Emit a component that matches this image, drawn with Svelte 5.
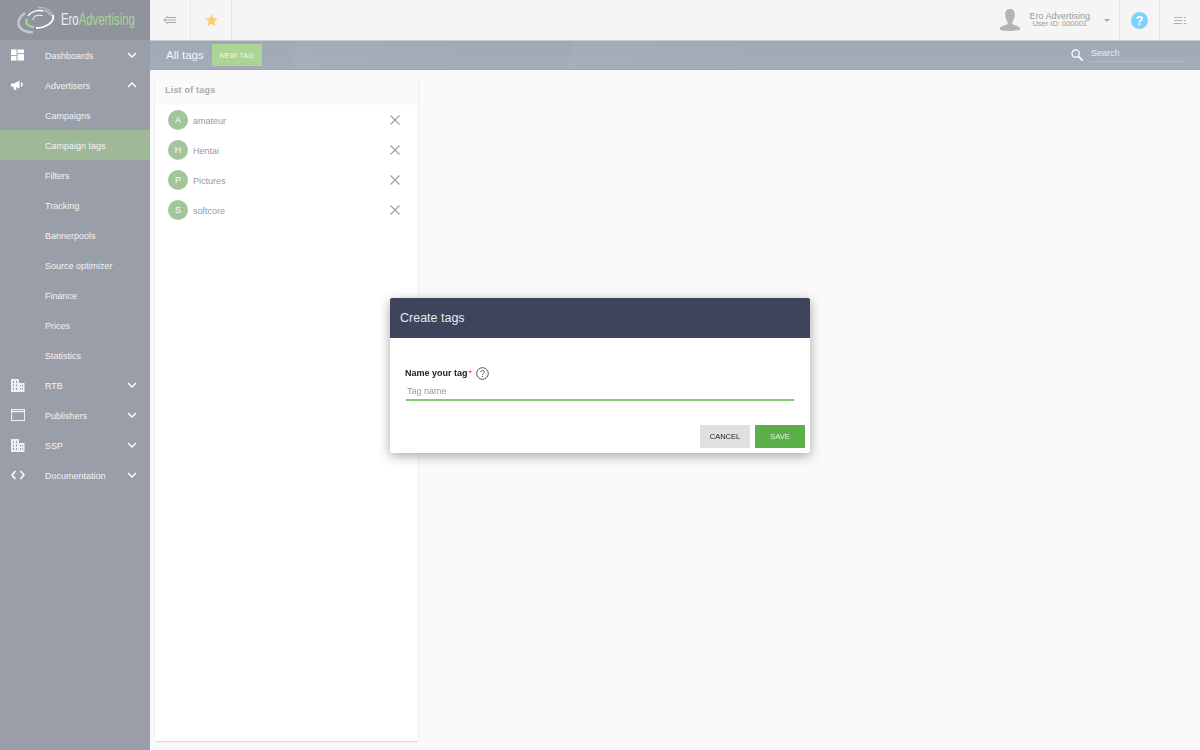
<script>
    const nav = [
        { label: "Dashboards", icon: "dash", arrow: "down" },
        { label: "Advertisers", icon: "horn", arrow: "up" },
        { label: "Campaigns" },
        { label: "Campaign tags", active: true },
        { label: "Filters" },
        { label: "Tracking" },
        { label: "Bannerpools" },
        { label: "Source optimizer" },
        { label: "Finance" },
        { label: "Prices" },
        { label: "Statistics" },
        { label: "RTB", icon: "building", arrow: "down" },
        { label: "Publishers", icon: "window", arrow: "down" },
        { label: "SSP", icon: "building", arrow: "down" },
        { label: "Documentation", icon: "code", arrow: "down" },
    ];

    const tags = ["amateur", "Hentai", "Pictures", "softcore"];
</script>

<div class="layout">
    <aside class="sidebar">
        <div class="logo">
            <svg width="44" height="32" viewBox="14 4 44 32" fill="none">
                <path d="M33 32 C24 33 16 27 19 20 C20 17 22 15 25 13" stroke="#c5c6c8" stroke-width="2.5" />
                <path d="M38 7.5 C46 7 52 11 53 17" stroke="#b9bbc0" stroke-width="1.3" />
                <path d="M38 10 C44 9.5 49 12 51 16" stroke="#c5c6c8" stroke-width="1.3" />
                <path d="M34 27 C28 27 25 23 27 19" stroke="#a5d48e" stroke-width="2.2" />
                <path d="M28 16 C31 12 37 10 43 11" stroke="#fff" stroke-width="1.4" />
                <path d="M53 15 C55 22 46 28 36 28" stroke="#fff" stroke-width="1.8" />
                <path d="M33 20 C33 16 38 14 43 16" stroke="#fff" stroke-width="1" />
            </svg>
            <span class="logo-text"><span>Ero</span><span class="logo-green">Advertising</span></span>
        </div>
        <nav>
            {#each nav as item}
                <a href="#top" class="nav-item" class:active={item.active}>
                    <span class="nav-icon">
                        {#if item.icon === "dash"}
                            <svg width="13" height="12" viewBox="0 0 14 12" fill="#fff">
                                <rect x="0" y="0" width="6" height="6" />
                                <rect x="0" y="7" width="6" height="5" />
                                <rect x="7" y="0" width="7" height="4" />
                                <rect x="7" y="5" width="7" height="7" />
                            </svg>
                        {:else if item.icon === "horn"}
                            <svg width="13" height="11" viewBox="0 0 13 11" fill="#fff">
                                <path d="M0 3.5 L3 3.5 L8.5 0.5 L8.5 8.5 L5 7 L5.5 10 L3 10 L2.5 6.8 L0 6.5 Z" />
                                <rect x="10" y="2.5" width="1.5" height="4" />
                            </svg>
                        {:else if item.icon === "building"}
                            <svg class="soft" width="14" height="13" viewBox="0 0 14 13" fill="#fff">
                                <path fill-rule="evenodd" d="M0 0 H8 V4 H13.5 V13 H0 Z M2 2 V4 H3 V2 Z M5 2 V4 H6 V2 Z M2 5.5 V7.5 H3 V5.5 Z M5 5.5 V7.5 H6 V5.5 Z M2 9 V11 H3 V9 Z M5 9 V11 H6 V9 Z M9 6 V7.5 H10 V6 Z M11 6 V7.5 H12 V6 Z M9 9 V10.5 H10 V9 Z M11 9 V10.5 H12 V9 Z" />
                            </svg>
                        {:else if item.icon === "window"}
                            <svg class="soft" width="14" height="12" viewBox="0 0 14 12" fill="none" stroke="#fff">
                                <rect x="0.5" y="0.5" width="13" height="11" />
                                <path d="M0 2.5 H14" stroke-width="1.5" />
                            </svg>
                        {:else if item.icon === "code"}
                            <svg width="14" height="10" viewBox="0 0 14 10" fill="none" stroke="#fff" stroke-width="1.5">
                                <path d="M4.5 1 L1 5 L4.5 9" />
                                <path d="M9.5 1 L13 5 L9.5 9" />
                            </svg>
                        {/if}
                    </span>
                    <span class="nav-label">{item.label}</span>
                    {#if item.arrow}
                        <svg class="nav-arrow" width="10" height="6" viewBox="0 0 10 6" fill="none" stroke="#fff" stroke-width="1.4">
                            {#if item.arrow === "down"}
                                <path d="M1 1 L5 5 L9 1" />
                            {:else}
                                <path d="M1 5 L5 1 L9 5" />
                            {/if}
                        </svg>
                    {/if}
                </a>
            {/each}
        </nav>
    </aside>

    <div class="main">
        <header class="topbar">
            <div class="top-cell first">
                <svg width="14" height="10" viewBox="0 0 14 10" fill="none" stroke="#a9a9a9" stroke-width="1">
                    <path d="M4.5 1 L0.8 5 L4.5 9" />
                    <path d="M1 5 H13 M4 2.5 H13 M4 7.5 H13" />
                </svg>
            </div>
            <div class="top-cell first">
                <svg width="13" height="12" viewBox="0 0 24 23" fill="#f8cf6c">
                    <path d="M12 0 L15.5 8 L24 8.8 L17.6 14.5 L19.5 23 L12 18.5 L4.5 23 L6.4 14.5 L0 8.8 L8.5 8 Z" />
                </svg>
            </div>
            <div class="top-space"></div>
            <div class="user">
                <svg class="user-pic" width="20" height="22" viewBox="0 0 20 22" fill="#b4b4b4">
                    <path d="M10 0 C13.5 0 15 2.5 14.8 6 C14.7 9 13.5 11.5 12.5 12.5 L12.5 15 C15 16.5 19 17 20 19 L20 21 Q10 23 0 21 L0 19 C1 17 5 16.500 7.5 15 L7.5 12.5 C6.5 11.5 5.3 9 5.2 6 C5 2.5 6.5 0 10 0 Z" />
                </svg>
                <div class="user-text">
                    <div class="user-name">Ero Advertising</div>
                    <div class="user-id">User ID: 000001</div>
                </div>
                <span class="caret"></span>
            </div>
            <div class="top-cell help-cell">
                <span class="help">?</span>
            </div>
            <div class="menu-cell">
                <svg width="12" height="7" viewBox="0 0 12 7" fill="#b4b4b4">
                    <rect x="0" y="0" width="8.5" height="1" />
                    <rect x="0" y="3" width="8.5" height="1" />
                    <rect x="0" y="6" width="8.5" height="1" />
                    <rect x="10" y="0" width="2" height="1" />
                    <rect x="10" y="3" width="2" height="1" />
                    <rect x="10" y="6" width="2" height="1" />
                </svg>
            </div>
        </header>

        <div class="subheader">
            <h1>All tags</h1>
            <button class="new-tag">NEW TAG</button>
            <div class="search">
                <svg class="search-icon" width="12" height="12" viewBox="0 0 13 13" fill="none" stroke="#fff" stroke-width="1.3">
                    <circle cx="5" cy="5" r="4" />
                    <path d="M8 8 L12.5 12.5" stroke-width="1.8" />
                </svg>
                <span class="search-box">Search</span>
            </div>
        </div>

        <div class="content">
            <section class="card">
                <div class="card-head">List of tags</div>
                {#each tags as tag}
                    <div class="tag-row">
                        <span class="avatar">{tag[0].toUpperCase()}</span>
                        <span class="tag-name">{tag}</span>
                        <svg width="10" height="10" viewBox="0 0 10 10" stroke="#a0a0a0" stroke-width="1.2">
                            <path d="M0.5 0.5 L9.5 9.5 M9.5 0.5 L0.5 9.5" />
                        </svg>
                    </div>
                {/each}
            </section>
        </div>
    </div>
</div>

<div class="overlay">
    <div class="dialog">
        <div class="dialog-head">Create tags</div>
        <div class="dialog-body">
            <div class="field-label">
                <b>Name your tag</b>
                <span class="req">*</span>
                <svg width="13" height="13" viewBox="0 0 13 13" fill="none" stroke="#555">
                    <circle cx="6.5" cy="6.5" r="5.8" />
                    <path d="M4.7 5.2 C4.7 3 8.3 3 8.3 5.1 C8.3 6.4 6.5 6.3 6.5 7.9" />
                    <path d="M6.5 9 V10" />
                </svg>
            </div>
            <input class="field" type="text" placeholder="Tag name" />
        </div>
        <div class="dialog-actions">
            <button class="cancel">CANCEL</button>
            <button class="save">SAVE</button>
        </div>
    </div>
</div>

<style>
    :global(body) {
        background: #fafafa;
        font-family: "Liberation Sans", Arial, sans-serif;
    }
    .layout {
        display: flex;
        height: 750px;
        overflow: hidden;
    }
    .sidebar {
        width: 150px;
        flex-shrink: 0;
        background: #9a9ea9;
    }
    .logo {
        height: 40px;
        background: #8f939d;
        display: flex;
        align-items: center;
        padding-left: 14px;
        box-sizing: border-box;
        white-space: nowrap;
    }
    .logo svg {
        flex-shrink: 0;
    }
    .logo-text {
        color: #eceef0;
        font-size: 16px;
        margin-left: 3px;
        transform: scaleX(0.71);
        transform-origin: left center;
    }
    .logo-green {
        color: #a8d694;
    }
    .nav-item {
        display: flex;
        align-items: center;
        height: 30px;
        color: #f2f3f4;
        font-size: 9px;
        text-decoration: none;
    }
    .nav-item.active {
        background: #9fb897;
    }
    .nav-icon {
        width: 45px;
        flex-shrink: 0;
        display: flex;
        padding-left: 11px;
        box-sizing: border-box;
    }
    .soft {
        opacity: 0.85;
    }
    .nav-label {
        flex: 1;
        padding-top: 1px;
    }
    .nav-arrow {
        margin-right: 13px;
    }
    .main {
        flex: 1;
        display: flex;
        flex-direction: column;
        min-width: 0;
    }
    .topbar {
        height: 40px;
        display: flex;
        background: #f5f5f5;
    }
    .top-cell {
        width: 40px;
        border-right: 1px solid #e6e6e6;
        display: flex;
        align-items: center;
        justify-content: center;
    }
    .top-space {
        flex: 1;
    }
    .user {
        display: flex;
        align-items: center;
        width: 120px;
        box-sizing: border-box;
        border-right: 1px solid #e6e6e6;
    }
    .user-pic {
        flex-shrink: 0;
    }
    .user-text {
        margin-left: 9px;
        width: 61px;
        flex-shrink: 0;
        color: #999;
        text-align: right;
        white-space: nowrap;
    }
    .user-name {
        font-size: 9px;
        line-height: 8px;
        margin-top: -1px;
    }
    .user-id {
        font-size: 7.5px;
        line-height: 7px;
        padding-right: 3px;
    }
    .caret {
        margin-left: 14px;
        border-left: 3px solid transparent;
        border-right: 3px solid transparent;
        border-top: 3px solid #a5a5a5;
    }
    .help-cell {
        width: 39px;
    }
    .help {
        width: 17px;
        height: 17px;
        border-radius: 50%;
        background: #7fd0fb;
        color: #fff;
        font-size: 13px;
        font-weight: 700;
        text-align: center;
        line-height: 17px;
    }
    .menu-cell {
        flex: 0 0 40px;
        display: flex;
        align-items: center;
        justify-content: center;
    }
    .subheader {
        height: 30px;
        display: flex;
        align-items: center;
        padding-left: 16px;
        background:
            linear-gradient(105deg, rgba(255, 255, 255, 0) 14%, rgba(255, 255, 255, 0.035) 14%, rgba(255, 255, 255, 0) 32%),
            linear-gradient(100deg, rgba(255, 255, 255, 0) 40%, rgba(255, 255, 255, 0.03) 40%, rgba(255, 255, 255, 0) 60%),
            linear-gradient(#a1a9b6, #a4acb9);
        box-shadow: inset 0 1px 0 #c8ccd2, inset 0 -1px 0 #9aa2ae;
        color: #fff;
    }
    .subheader h1 {
        font-size: 11.5px;
        font-weight: 400;
        margin: 0 8px 0 0;
        color: #f4f5f6;
    }
    .new-tag {
        height: 22px;
        width: 50px;
        padding: 0;
        border: none;
        background: #acd495;
        color: #f0f7ec;
        font: 7.5px "Liberation Sans", sans-serif;
    }
    .search {
        margin-left: auto;
        display: flex;
        align-items: center;
        margin-right: 16px;
    }
    .search-icon {
        margin-top: -1px;
    }
    .search-box {
        margin: -4px 0 0 7px;
        width: 94px;
        height: 18px;
        line-height: 19px;
        padding-left: 1px;
        box-sizing: border-box;
        border-bottom: 1px solid #b5bbc5;
        font-size: 9px;
        color: #e9ebee;
    }
    .content {
        flex: 1;
        padding: 5px 0 9px 5px;
        display: flex;
        min-height: 0;
    }
    .card {
        width: 263px;
        background: #fff;
        border-radius: 2px;
        box-shadow: 0 1px 2px rgba(0, 0, 0, 0.16);
    }
    .card-head {
        height: 30px;
        line-height: 30px;
        padding-left: 10px;
        background: #fafafa;
        color: #aaa;
        font-size: 9px;
        font-weight: 700;
        letter-spacing: 0.2px;
    }
    .tag-row {
        height: 30px;
        display: flex;
        align-items: center;
        padding: 0 18px 0 13px;
    }
    .avatar {
        width: 20px;
        height: 20px;
        border-radius: 50%;
        background: #a3c59b;
        color: #fff;
        font-size: 9px;
        line-height: 20px;
        text-align: center;
    }
    .tag-name {
        flex: 1;
        margin-left: 5px;
        padding-top: 1px;
        color: #9a9a9a;
        font-size: 9px;
    }
    .overlay {
        position: fixed;
        inset: 0;
        display: flex;
        align-items: center;
        justify-content: center;
    }
    .dialog {
        width: 420px;
        height: 155px;
        margin-top: 1px;
        background: #fff;
        border-radius: 2px;
        box-shadow: 0 3px 12px rgba(0, 0, 0, 0.35);
        display: flex;
        flex-direction: column;
        overflow: hidden;
    }
    .dialog-head {
        height: 40px;
        line-height: 40px;
        padding-left: 10px;
        background: #3d445c;
        color: #e8e9ed;
        font-size: 12.5px;
    }
    .dialog-body {
        flex: 1;
        padding: 28px 16px 0 15px;
    }
    .field-label {
        display: flex;
        align-items: center;
        height: 14px;
        font-size: 9px;
        color: #222;
    }
    .req {
        color: #e3342f;
        margin: 0 4px 0 1px;
    }
    .field {
        display: block;
        width: 388px;
        height: 20px;
        margin: 1px 0 0 1px;
        padding: 2px 2px 0 1px;
        box-sizing: border-box;
        border: none;
        border-bottom: 2px solid #86c873;
        background: transparent;
        outline: none;
        font: 9px "Liberation Sans", sans-serif;
    }
    .field::placeholder {
        color: #999;
    }
    .dialog-actions {
        display: flex;
        justify-content: flex-end;
        gap: 5px;
        padding: 0 5px 5px 0;
    }
    .dialog-actions button {
        width: 50px;
        height: 23px;
        padding: 0;
        border: none;
        font: 7.5px "Liberation Sans", sans-serif;
    }
    .cancel {
        background: #e0e0e0;
        color: #222;
    }
    .save {
        background: #5cae48;
        color: #e6f3e2;
    }
</style>
